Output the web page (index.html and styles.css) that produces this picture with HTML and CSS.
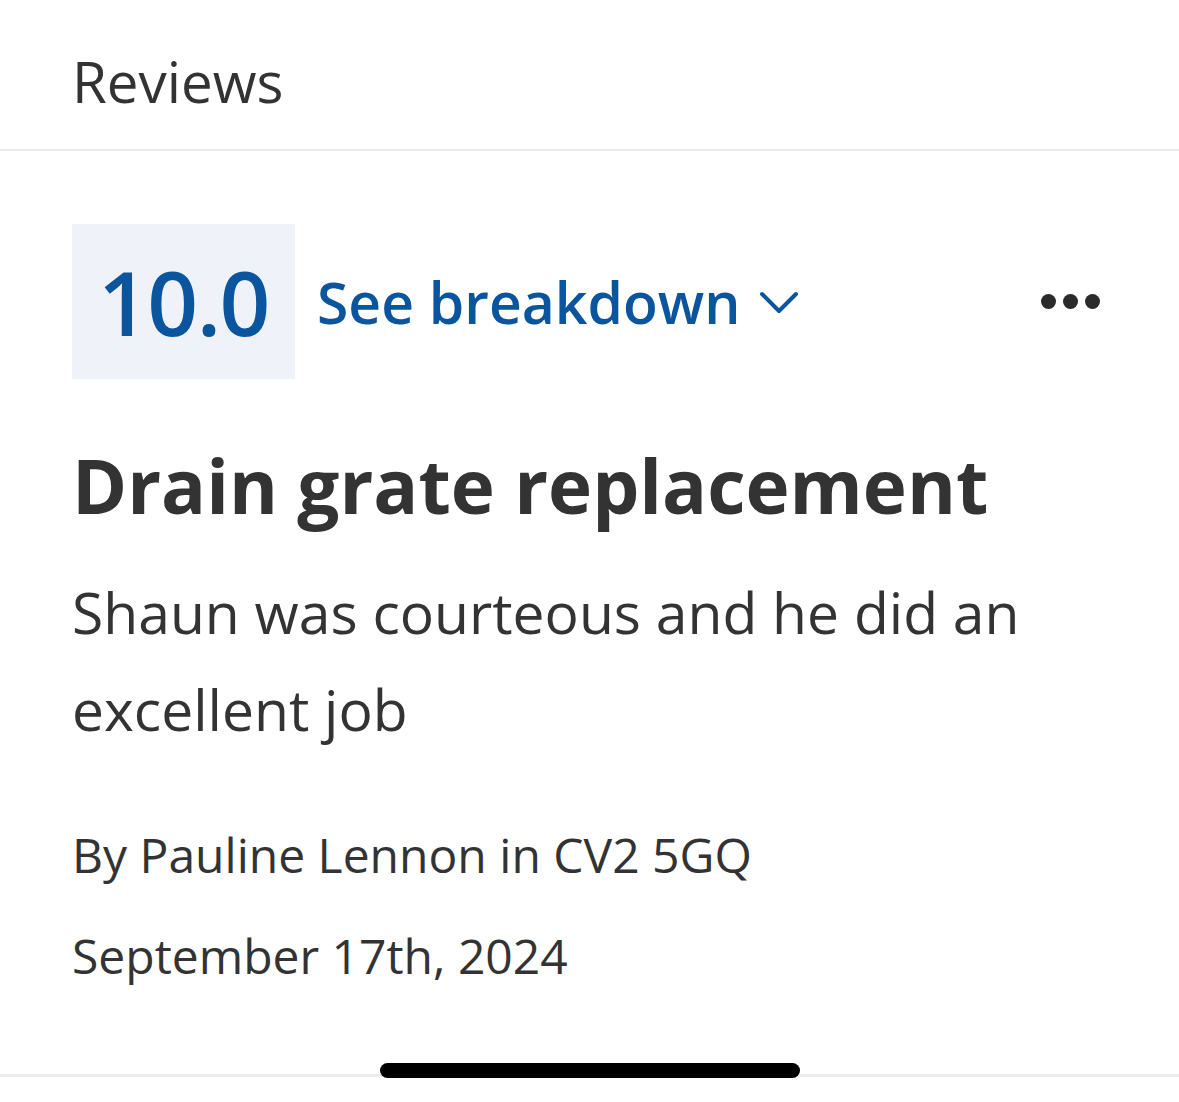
FILE: index.html
```html
<!DOCTYPE html>
<html lang="en">
<head>
<meta charset="utf-8">
<title>Reviews</title>
<link rel="stylesheet" href="styles.css">
</head>
<body>
<div class="screen">
  <header class="header">
    <h1 class="header-title">Reviews</h1>
  </header>
  <article class="review">
    <div class="score-row">
      <div class="score-box">10.0</div>
      <button class="breakdown">
        <span>See breakdown</span>
        <svg class="chevron" width="38" height="24" viewBox="0 0 38 24"><path d="M2 3 L19 20 L36 3" fill="none" stroke="#0b559e" stroke-width="4" stroke-linecap="round" stroke-linejoin="round"/></svg>
      </button>
      <div class="more" aria-label="More">
        <span class="dot"></span><span class="dot"></span><span class="dot"></span>
      </div>
    </div>
    <h2 class="review-title">Drain grate replacement</h2>
    <p class="review-body">Shaun was courteous and he did an excellent job</p>
    <p class="meta meta-author">By Pauline Lennon in CV2 5GQ</p>
    <p class="meta meta-date">September 17th, 2024</p>
  </article>
  <div class="home-indicator"></div>
</div>
</body>
</html>
```
FILE: styles.css
```css
* { box-sizing: border-box; }
html, body { margin: 0; padding: 0; background: #fff; }
body {
  font-family: "Open Sans", "Noto Sans", sans-serif;
  color: #333333;
}
.screen {
  position: relative;
  width: 1179px;
  height: 1102px;
  overflow: hidden;
}
.header {
  padding: 44px 72px 29px;
  border-bottom: 2px solid #e9e9e9;
}
.header-title {
  margin: 0;
  font-size: 56.5px;
  font-weight: 400;
  line-height: 76px;
  color: #333;
}
.review {
  padding: 73px 79px 0 72px;
  border-bottom: 3px solid #ececec;
  height: 926px;
}
.score-row {
  display: flex;
  align-items: center;
}
.score-box {
  width: 223px;
  height: 155px;
  background: #eff3f9;
  display: flex;
  align-items: center;
  justify-content: center;
  font-size: 89px;
  font-weight: 600;
  color: #0b559e;
  letter-spacing: -1.5px;
}
.breakdown {
  display: flex;
  align-items: center;
  gap: 20px;
  margin-left: 22px;
  padding: 0;
  border: 0;
  background: none;
  font-family: inherit;
  font-size: 57px;
  font-weight: 600;
  color: #0b559e;
}
.chevron { margin-top: 2px; }
.more {
  margin-left: auto;
  display: flex;
  gap: 7px;
}
.dot {
  width: 15px;
  height: 15px;
  border-radius: 50%;
  background: #2b2b2b;
}
.review-title {
  margin: 57px 0 0 0;
  font-size: 74.6px;
  font-weight: 700;
  line-height: 98px;
  color: #333;
}
.review-body {
  margin: 30px 0 0 0;
  font-size: 57px;
  line-height: 97px;
  color: #333;
}
.meta {
  margin: 0;
  font-size: 48px;
  line-height: 93px;
  color: #333;
}
.meta-author { margin-top: 50px; }
.meta-date { margin-top: 8px; }
.home-indicator {
  position: absolute;
  left: 380px;
  top: 1063px;
  width: 420px;
  height: 15px;
  border-radius: 8px;
  background: #000;
}
```
